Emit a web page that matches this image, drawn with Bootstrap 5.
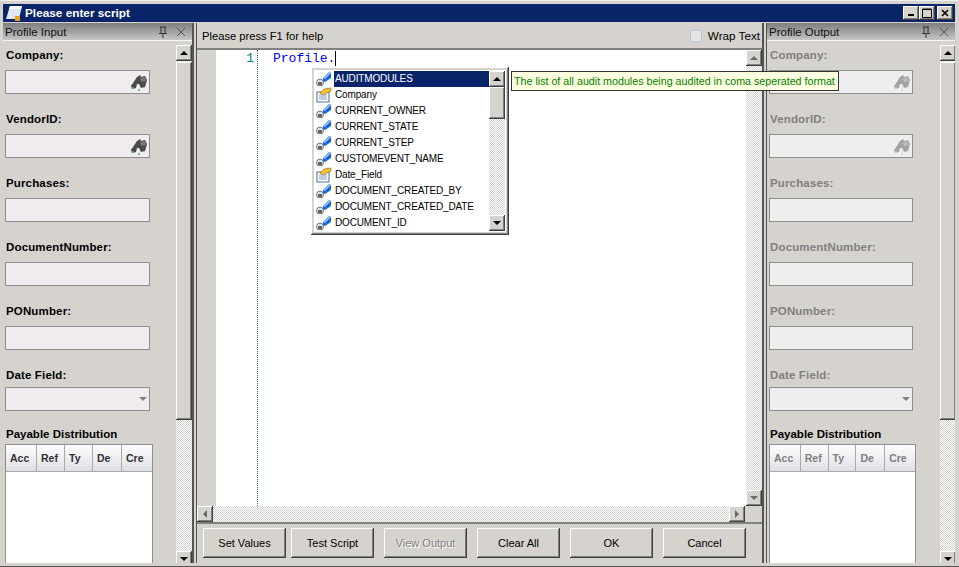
<!doctype html>
<html lang="en"><head><meta charset="utf-8"><title>Please enter script</title>
<link href="https://cdn.jsdelivr.net/npm/bootstrap@5.3.0/dist/css/bootstrap.min.css" rel="stylesheet">
<style>
html,body{height:567px;overflow:hidden;background:#d6d3ce;}
body{font:11.2px/14px "Liberation Sans",sans-serif;color:#000;}
.win{height:567px;padding:3px 4px 4px 3px;border-top:1px solid #f2f0ec;background:linear-gradient(#555,#555) 0 565px/100% 1px no-repeat;}
.tbar{height:18px;background:#0a246a;color:#fff;font-weight:700;font-size:11.8px;padding:0 2px 0 2px;flex:none;}
.tbar svg{margin-right:2px;}
.capbtn{width:16px;height:14px;background:#d6d3ce;box-shadow:inset -1px -1px #404040,inset 1px 1px #fff,inset -2px -2px #808080;}
.capx{margin-left:2px}
.main{height:540px;margin-top:1px;}
.side{width:189px;flex:none;overflow:hidden;}
.side2{width:188px;}
.phead{height:18px;flex:none;background:linear-gradient(#7d7d7d,#c6c6c6);border-bottom:1px solid #f4f4f4;padding:0 6px 0 2px;font-size:11.5px;color:#111;}
.phead svg{flex:none}
.pbody{min-height:0;overflow:hidden;}
.pform{width:173px;padding:7px 0 0 2px;flex:none;}
.flabel{display:block;font-weight:700;font-size:11.5px;letter-spacing:.15px;height:14px;margin:0 0 8px 1px;}
.off .flabel{color:#808080;}
.off .flabel.on{color:#000;}
.fbox{position:relative;height:24px;width:145px;margin-bottom:18px;}
.off .fbox{width:144px;}
.fbox .form-control,.fbox .form-select{height:24px;padding:0;border:1px solid #8e8e8e;border-radius:0;background:#efebef;box-shadow:none;min-height:0;}
.off .fbox .form-control,.off .fbox .form-select{background:#eee;}
.fbox svg{position:absolute;right:2px;top:4px;}
.off .fbox svg{opacity:.45;filter:grayscale(1);}
.caret{position:absolute;right:3px;top:10px;width:0;height:0;border:4px solid transparent;border-top:4px solid #808080;border-bottom:0;}
.flabel.tight{margin-bottom:5px;}
.fbox.last{margin-bottom:16px}
.flabel.grid{margin-bottom:3px;letter-spacing:0;}
.dgrid{width:148px;height:200px;border:1px solid #8e8e8e;border-bottom:0;background:#fff;margin:0;}
.off .dgrid{width:147px;}
.dgcols{height:27px;background:linear-gradient(#fdfdfe,#dfe0e6);border-bottom:1px solid #aaa;font-weight:700;font-size:10.5px;color:#333;}
.off .dgcols{color:#808080;}
.dgcols span{border-right:1px solid #aaa;padding-left:4px;line-height:26px;}
.vbar{width:16px;flex:none;background:repeating-conic-gradient(#d6d3ce 0 25%,#fff 0 50%) 0 0/2px 2px;}
.hbar{height:16px;background:repeating-conic-gradient(#d6d3ce 0 25%,#fff 0 50%) 0 0/2px 2px;}
.sbtn{width:16px;height:16px;flex:none;background:#d6d3ce;box-shadow:inset -1px -1px #404040,inset 1px 1px #fff,inset -2px -2px #808080;display:flex;align-items:center;justify-content:center;}
.thumb{background:#d6d3ce;box-shadow:inset -1px -1px #404040,inset 1px 1px #fff,inset -2px -2px #808080;}
.tri{width:0;height:0;border:4px solid transparent;}
.tu{border-top:0;border-bottom-color:#000}
.td{border-bottom:0;border-top-color:#000}
.tl{border-left:0;border-right-color:#000}
.tr{border-right:0;border-left-color:#000}
.dim .tri{opacity:.5}
.split{width:5px;flex:none;border-left:2px solid #555;border-right:1px solid #555;background:#d6d3ce;}
.center{min-width:0;}
.ctool{height:27px;flex:none;padding:0 2px 0 5px;border-bottom:2px solid #808080;}
.wrapchk{margin:0;min-height:0;padding:0;font-size:11.7px;}
.wrapchk .form-check-input{float:none;margin:0 6px 0 0;width:12px;height:12px;border-radius:0;border:1px solid #b9c3dc;background:#e8e6e0;}
.wrapchk .form-check-label{opacity:1;}
.edit{min-height:0;position:relative;}
.gutter{width:19px;background:#d6d3ce;flex:none;}
.codearea{background:#fff;min-width:0;}
.nums{width:42px;flex:none;border-right:1px dotted #2a7a7a;font:13px/15px "Liberation Mono",monospace;color:#0a7a7a;text-align:right;padding:1px 3px 0 0;}
.code{font:13px/15px "Liberation Mono",monospace;color:#00f;padding:1px 0 0 15px;}
.code i{font-style:normal;color:#000;border-right:1px solid #000;}
.hrow{height:16px;flex:none;}
.hcorner{width:17px;flex:none;}
.foot{height:41px;flex:none;border-top:2px solid #808080;padding:4px 0 0 6px;gap:5px;}
.foot .btn{width:83px;height:30px;padding:0;border:0;border-radius:0;background:#d6d3ce;color:#000;font-size:11px;box-shadow:inset -1px -1px #404040,inset 1px 1px #fff,inset -2px -2px #808080;}
.foot .btn:disabled{color:#808080;opacity:1;text-shadow:1px 1px #fff;}
.ms5{margin-left:5px}
.popup{position:absolute;left:114px;top:17px;width:198px;height:168px;background:#fff;padding:4px;box-shadow:inset -1px -1px #404040,inset 1px 1px #fff,inset -2px -2px #808080,inset 2px 2px #d6d3ce,inset -3px -3px #d6d3ce,inset 3px 3px #d6d3ce;z-index:3;}
.plist{width:174px;border-radius:0;}
.plist .list-group-item{height:16px;padding:0 0 0 1px;border:0;border-radius:0;background:transparent;color:#000;font-size:10px;letter-spacing:-.15px;line-height:16px;white-space:nowrap;}
.plist .list-group-item svg{margin-right:2px;flex:none;}
.plist .list-group-item span{padding:0 1px;}
.plist .list-group-item.sel span{background:#0a246a;color:#fff;outline:1px dotted #fff;width:155px;display:block;}
.pvbar{width:16px;flex:none;height:160px}
.tip{position:absolute;left:314px;top:21px;height:20px;width:328px;background:#ffffe1;border:1px solid #333;color:#008000;font-size:10.7px;line-height:18px;padding-left:2px;white-space:nowrap;z-index:4;}
</style></head><body>
<svg width="0" height="0" class="position-absolute">
<defs>
<symbol id="bino" viewBox="0 0 18 18"><path d="M7 3l3-2 1 2 4-1 2 4-2 7-4 1-2-4-2 0-1 4-4 1-1-3z" fill="#4a4a4a"/><path d="M10 4l5-1 1 4-5 1z" fill="#777"/><circle cx="3" cy="14" r="1" fill="#3fc46a"/><circle cx="9" cy="16" r="1" fill="#3fc46a"/></symbol>
<symbol id="prop" viewBox="0 0 16 16"><circle cx="4" cy="11.500" r="3.500" fill="#dfe1e8" stroke="#777"/><rect x="2" y="11" width="4" height="3" fill="#666"/><path d="M7 7l6-6 2 1v5l-6 4-2-1z" fill="#1a66d8"/><path d="M7 7l6-6 2 1-6 6z" fill="#8fc0f6"/></symbol>
<symbol id="fld" viewBox="0 0 16 16"><rect x="1" y="5" width="12" height="10" fill="#fff" stroke="#47709c"/><path d="M3 8h8M3 10h8M3 12h8" stroke="#7aa0c8"/><path d="M4 6l4-4 7-1 0 3-4 2-4 2z" fill="#f2c230" stroke="#8a6a10" stroke-width=".6"/></symbol>
<symbol id="pin" viewBox="0 0 10 12"><path d="M2 1h6M3 1v6M7 1v6M1 7.500h8M5 8v4" stroke="#333" fill="none"/></symbol>
<symbol id="xic" viewBox="0 0 10 10"><path d="M1 1l8 8M9 1l-8 8" stroke="#555" fill="none"/></symbol>
</defs></svg>
<div class="win d-flex flex-column">
 <div class="tbar d-flex align-items-center">
  <svg width="18" height="17" viewBox="0 0 18 17"><path d="M5 1h12l-3 13H1z" fill="#dfe6f5"/><path d="M5 1h12l-1 3H4z" fill="#fff"/><rect x="10" y="11" width="5" height="5" fill="#e8a020"/></svg>
  <span class="flex-grow-1">Please enter script</span>
  <span class="capbtn d-flex align-items-end justify-content-center pb-1"><svg width="6" height="2" class="m-0"><rect width="6" height="2"/></svg></span>
  <span class="capbtn d-flex align-items-center justify-content-center"><svg width="10" height="10" class="m-0"><path d="M.5 1.500h9v8h-9zM.5 1h9" fill="none" stroke="#000"/></svg></span>
  <span class="capbtn capx d-flex align-items-center justify-content-center"><svg width="8" height="8" class="m-0"><path d="M1 1l6 6M7 1l-6 6" stroke="#000" stroke-width="1.600"/></svg></span>
 </div>
 <div class="main d-flex">
  <section class="side d-flex flex-column">
   <div class="phead d-flex align-items-center"><span class="flex-grow-1">Profile Input</span><svg width="10" height="12" class="me-2"><use href="#pin"/></svg><svg width="10" height="10"><use href="#xic"/></svg></div>
   <div class="pbody d-flex flex-grow-1">
    <form class="pform">
     <label class="flabel">Company:</label><div class="fbox"><input class="form-control"><svg width="18" height="18"><use href="#bino"/></svg></div>
     <label class="flabel">VendorID:</label><div class="fbox"><input class="form-control"><svg width="18" height="18"><use href="#bino"/></svg></div>
     <label class="flabel">Purchases:</label><div class="fbox"><input class="form-control"></div>
     <label class="flabel">DocumentNumber:</label><div class="fbox"><input class="form-control"></div>
     <label class="flabel">PONumber:</label><div class="fbox"><input class="form-control"></div>
     <label class="flabel tight">Date Field:</label><div class="fbox last"><div class="form-control"></div><span class="caret"></span></div>
     <label class="flabel grid">Payable Distribution</label>
     <div class="dgrid"><div class="dgcols d-flex"><span style="width:31px">Acc</span><span style="width:28px">Ref</span><span style="width:28px">Ty</span><span style="width:29px">De</span><span class="border-0" style="width:30px">Cre</span></div></div>
    </form>
    <div class="vbar d-flex flex-column mt-1 ms-auto h-100 me-0"><div class="sbtn"><i class="tri tu"></i></div><div class="thumb" style="height:358px;margin-top:1px"></div><div class="sbtn mt-auto"><i class="tri td"></i></div></div>
   </div>
  </section>
  <div class="split"></div>
  <section class="center flex-grow-1 d-flex flex-column">
   <div class="ctool d-flex align-items-center justify-content-between"><span>Please press F1 for help</span>
    <div class="form-check wrapchk d-flex align-items-center"><input class="form-check-input" type="checkbox" id="w1"><label class="form-check-label" for="w1">Wrap Text</label></div></div>
   <div class="edit flex-grow-1 d-flex flex-column">
    <div class="d-flex flex-grow-1" style="min-height:0">
     <div class="gutter"></div>
     <div class="codearea flex-grow-1 d-flex"><div class="nums">1</div><div class="code">Profile.<i></i></div></div>
     <div class="vbar d-flex flex-column dim"><div class="sbtn"><i class="tri tu"></i></div><div class="sbtn mt-auto"><i class="tri td"></i></div></div>
    </div>
    <div class="hrow d-flex"><div class="hbar flex-grow-1 d-flex justify-content-between dim"><div class="sbtn"><i class="tri tl"></i></div><div class="sbtn"><i class="tri tr"></i></div></div><div class="hcorner"></div></div>
    <div class="popup d-flex">
     <div class="list-group plist">
      <div class="list-group-item sel d-flex"><svg width="16" height="16"><use href="#prop"/></svg><span>AUDITMODULES</span></div>
      <div class="list-group-item d-flex"><svg width="16" height="16"><use href="#fld"/></svg><span>Company</span></div>
      <div class="list-group-item d-flex"><svg width="16" height="16"><use href="#prop"/></svg><span>CURRENT_OWNER</span></div>
      <div class="list-group-item d-flex"><svg width="16" height="16"><use href="#prop"/></svg><span>CURRENT_STATE</span></div>
      <div class="list-group-item d-flex"><svg width="16" height="16"><use href="#prop"/></svg><span>CURRENT_STEP</span></div>
      <div class="list-group-item d-flex"><svg width="16" height="16"><use href="#prop"/></svg><span>CUSTOMEVENT_NAME</span></div>
      <div class="list-group-item d-flex"><svg width="16" height="16"><use href="#fld"/></svg><span>Date_Field</span></div>
      <div class="list-group-item d-flex"><svg width="16" height="16"><use href="#prop"/></svg><span>DOCUMENT_CREATED_BY</span></div>
      <div class="list-group-item d-flex"><svg width="16" height="16"><use href="#prop"/></svg><span>DOCUMENT_CREATED_DATE</span></div>
      <div class="list-group-item d-flex"><svg width="16" height="16"><use href="#prop"/></svg><span>DOCUMENT_ID</span></div>
     </div>
     <div class="vbar pvbar d-flex flex-column"><div class="sbtn"><i class="tri tu"></i></div><div class="thumb" style="height:32px"></div><div class="sbtn mt-auto"><i class="tri td"></i></div></div>
    </div>
    <div class="tip">The list of all audit modules being audited in coma seperated format</div>
   </div>
   <div class="foot d-flex"><button class="btn">Set Values</button><button class="btn">Test Script</button><button class="btn ms5" disabled>View Output</button><button class="btn ms5">Clear All</button><button class="btn ms5">OK</button><button class="btn ms5">Cancel</button></div>
  </section>
  <div class="split"></div>
  <section class="side side2 d-flex flex-column off">
   <div class="phead d-flex align-items-center"><span class="flex-grow-1">Profile Output</span><svg width="10" height="12" class="me-2"><use href="#pin"/></svg><svg width="10" height="10"><use href="#xic"/></svg></div>
   <div class="pbody d-flex flex-grow-1">
    <form class="pform">
     <label class="flabel">Company:</label><div class="fbox"><input class="form-control" disabled><svg width="18" height="18"><use href="#bino"/></svg></div>
     <label class="flabel">VendorID:</label><div class="fbox"><input class="form-control" disabled><svg width="18" height="18"><use href="#bino"/></svg></div>
     <label class="flabel">Purchases:</label><div class="fbox"><input class="form-control" disabled></div>
     <label class="flabel">DocumentNumber:</label><div class="fbox"><input class="form-control" disabled></div>
     <label class="flabel">PONumber:</label><div class="fbox"><input class="form-control" disabled></div>
     <label class="flabel tight">Date Field:</label><div class="fbox last"><div class="form-control"></div><span class="caret"></span></div>
     <label class="flabel grid on">Payable Distribution</label>
     <div class="dgrid"><div class="dgcols d-flex"><span style="width:31px">Acc</span><span style="width:28px">Ref</span><span style="width:28px">Ty</span><span style="width:29px">De</span><span class="border-0" style="width:30px">Cre</span></div></div>
    </form>
    <div class="vbar d-flex flex-column mt-1 ms-auto h-100"><div class="sbtn"><i class="tri tu"></i></div><div class="thumb" style="height:358px;margin-top:1px"></div><div class="sbtn mt-auto"><i class="tri td"></i></div></div>
   </div>
  </section>
 </div>
</div>
<script src="https://cdn.jsdelivr.net/npm/bootstrap@5.3.0/dist/js/bootstrap.bundle.min.js"></script>
</body></html>
